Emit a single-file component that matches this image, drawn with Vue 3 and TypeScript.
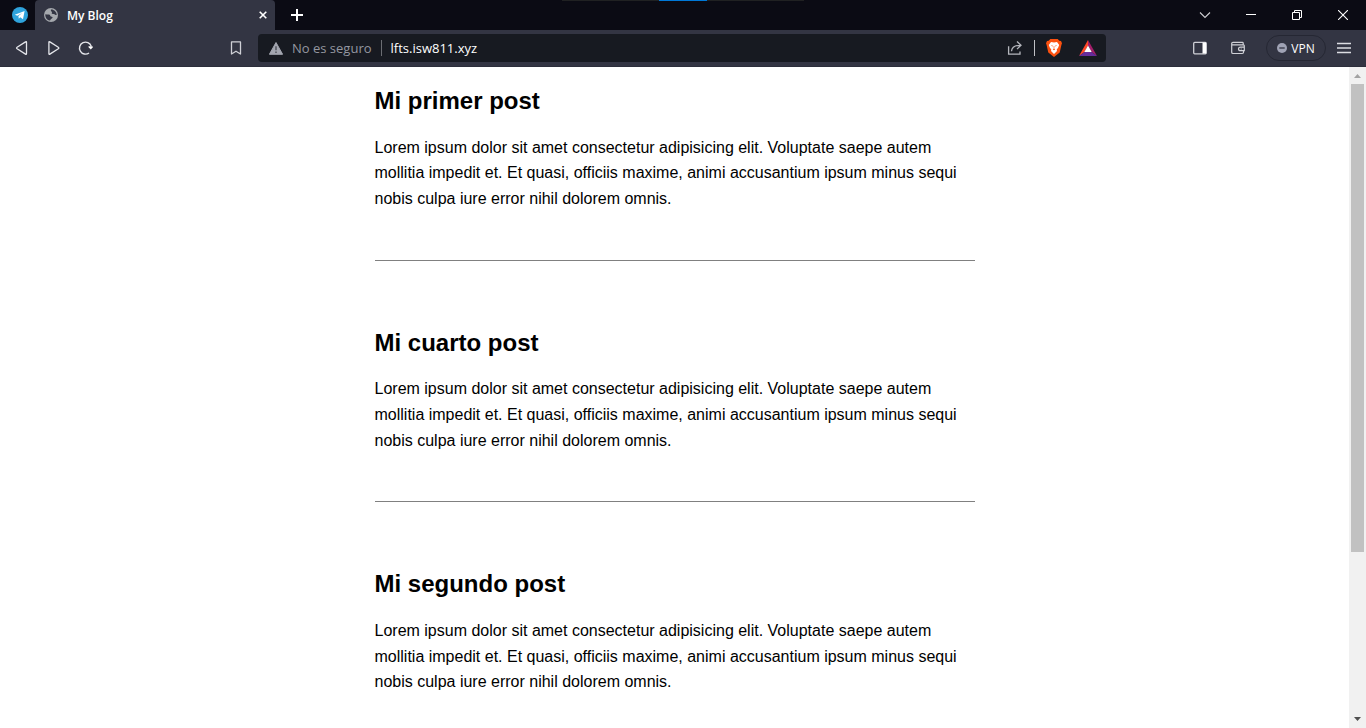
<script setup lang="ts">
interface Post {
  id: number
  title: string
  body: string
}

const body =
  'Lorem ipsum dolor sit amet consectetur adipisicing elit. Voluptate saepe autem mollitia impedit et. Et quasi, officiis maxime, animi accusantium ipsum minus sequi nobis culpa iure error nihil dolorem omnis.'

const posts: Post[] = [
  { id: 1, title: 'Mi primer post', body },
  { id: 4, title: 'Mi cuarto post', body },
  { id: 2, title: 'Mi segundo post', body },
]
</script>

<template>
  <div class="browser">
    <header class="chrome">
      <div class="tabstrip">
        <div class="drag-hint" aria-hidden="true"><span></span></div>
        <button class="pinned" aria-label="Telegram">
          <svg width="16" height="16" viewBox="0 0 16 16">
            <circle cx="8" cy="8" r="8" fill="#2fa3dc" />
            <path d="M2.8 7.8 12.6 4 11 12.2 8.2 10.3 6.8 11.7 6.4 9 10.2 5.9 5.3 8.7Z" fill="#fff" />
          </svg>
        </button>
        <div class="tab">
          <svg width="14" height="14" viewBox="0 0 14 14">
            <circle cx="7" cy="7" r="7" fill="#a5a8ad" />
            <path d="M1.3 6.2C3.5 6.6 5 6 5.9 7.1 6.6 8 6.2 8.7 7.8 8.8 9 8.9 8.7 10 7.8 10.4 6.5 11 6.8 12 5.6 12.5 3 12 1.1 9.5 1.3 6.2Z" fill="#333543" />
            <path d="M7 1.6C9.7 1.3 12.6 3.8 12.7 7 11 7.2 10.8 5.7 9.2 6 7.8 6.2 7.3 5.3 8 4.6 8.7 4 6.3 3.6 7 1.6Z" fill="#333543" />
          </svg>
          <span class="tab-title">My Blog</span>
          <button class="tab-close" aria-label="Cerrar pestaña">
            <svg width="8" height="8" viewBox="0 0 8 8"><path d="M.7.7 7.3 7.3M7.3.7.7 7.3" stroke="#fff" stroke-width="1.6" /></svg>
          </button>
        </div>
        <button class="new-tab" aria-label="Nueva pestaña">
          <svg width="12" height="12" viewBox="0 0 12 12"><path d="M6 0V12M0 6H12" stroke="#fff" stroke-width="2" /></svg>
        </button>
        <div class="window-controls">
          <button aria-label="Buscar pestañas">
            <svg width="12" height="12" viewBox="0 0 12 12"><path d="M1 3.5 6 8.5 11 3.5" fill="none" stroke="#d0d0d4" stroke-width="1.1" /></svg>
          </button>
          <button aria-label="Minimizar">
            <svg width="10" height="10" viewBox="0 0 10 10"><path d="M0 4.5H10" stroke="#fff" /></svg>
          </button>
          <button aria-label="Restaurar">
            <svg width="10" height="10" viewBox="0 0 10 10"><path d="M.5 2.5H7.5V9.5H.5ZM2.5 2.5V.5H9.5V7.5H7.5" fill="none" stroke="#fff" /></svg>
          </button>
          <button aria-label="Cerrar">
            <svg width="10" height="10" viewBox="0 0 10 10"><path d="M0 0 10 10M10 0 0 10" stroke="#fff" stroke-width="1.1" /></svg>
          </button>
        </div>
      </div>

      <div class="toolbar">
        <div class="nav">
          <button aria-label="Atrás">
            <svg width="16" height="16" viewBox="0 0 16 16"><path d="M12.5 2.4V13.6Q12.5 14.8 11.5 14.1L3.1 8.8Q2 8 3.1 7.2L11.5 1.9Q12.5 1.2 12.5 2.4Z" fill="none" stroke="#e4e5ea" stroke-width="1.3" /></svg>
          </button>
          <button aria-label="Adelante">
            <svg width="16" height="16" viewBox="0 0 16 16"><path d="M2.9 2.4V13.6Q2.9 14.8 3.9 14.1L12.3 8.8Q13.4 8 12.3 7.2L3.9 1.9Q2.9 1.2 2.9 2.4Z" fill="none" stroke="#e4e5ea" stroke-width="1.3" /></svg>
          </button>
          <button aria-label="Recargar">
            <svg width="16" height="16" viewBox="0 0 16 16">
              <path d="M11 13A6 6 0 1 1 13.2 6.2" fill="none" stroke="#e4e5ea" stroke-width="1.4" />
              <path d="M10.4 6.2H14.6V7.6L12.8 9.4 10.8 7.6Z" fill="#fff" />
            </svg>
          </button>
        </div>
        <button class="bookmark" aria-label="Guardar marcador">
          <svg width="12" height="14" viewBox="0 0 12 14"><path d="M1.5.9H10.5V13L6 10.2 1.5 13Z" fill="none" stroke="#cfd0d6" stroke-width="1.3" stroke-linejoin="round" /></svg>
        </button>
        <div class="address">
          <button class="security">
            <svg width="14" height="13" viewBox="0 0 14 13">
              <path d="M7 .5 13.6 12.3H.4Z" fill="#a3a6b0" stroke="#a3a6b0" stroke-linejoin="round" />
              <path d="M7 4.2V8.2M7 9.4V11" stroke="#4b4e57" stroke-width="1.4" />
            </svg>
            <span>No es seguro</span>
          </button>
          <span class="rule"></span>
          <input class="url" type="text" value="lfts.isw811.xyz" aria-label="Dirección" />
          <button class="share" aria-label="Compartir">
            <svg width="16" height="16" viewBox="0 0 16 16">
              <path d="M1.6 6.3V14.2H13V11.4" fill="none" stroke="#b5b7bd" stroke-width="1.3" />
              <path d="M4.5 11.3C4.8 7.2 7.3 5.3 13.6 5.3M10 1.5 14 5.3 10 9.1" fill="none" stroke="#b5b7bd" stroke-width="1.3" />
            </svg>
          </button>
          <span class="rule light"></span>
          <button class="shield" aria-label="Brave Shields">
            <svg width="16" height="18" viewBox="0 0 16 18">
              <path d="M4.3 0H11.7L13.3 1.8 15 2 16 4.3 15.4 6 13.7 13.6 8 18 2.3 13.6.6 6 0 4.3 1 2 2.7 1.8Z" fill="#fb5110" />
              <path d="M5 3 8 3.6 11 3 13.2 6 12.1 8.8 10.7 10.5 11 12 8 15 5 12 5.3 10.5 3.9 8.8 2.8 6Z" fill="#fff" />
              <path d="M4.8 6.2 7 6.8 6.4 7.6ZM11.2 6.2 9 6.8 9.6 7.6ZM7.7 7H8.3V9.8L9.2 10.5 8 11.3 6.8 10.5 7.7 9.8Z" fill="#fb5110" />
            </svg>
          </button>
          <button class="rewards" aria-label="Brave Rewards">
            <svg width="18" height="16" viewBox="0 0 18 16">
              <path d="M9 0 0 16 5.5 12 9 5.5Z" fill="#ff4726" />
              <path d="M9 0 18 16 12.5 12 9 5.5Z" fill="#a21e69" />
              <path d="M0 16H18L12.5 12H5.5Z" fill="#652c9b" />
              <path d="M9 5.5 12.7 12H5.3Z" fill="#fff" />
            </svg>
          </button>
        </div>
        <div class="tools">
          <button aria-label="Barra lateral">
            <svg width="14" height="14" viewBox="0 0 14 14"><rect x=".7" y="1.4" width="12.6" height="11.4" rx="1" fill="none" stroke="#cfd0d6" stroke-width="1.3" /><path d="M9.5 1.5H13V12.5H9.5Z" fill="#fff" /></svg>
          </button>
          <button aria-label="Cartera">
            <svg width="14" height="14" viewBox="0 0 14 14"><path d="M12.2 3.8V2.2Q12.2 1.4 11.4 1.4H2Q.7 1.4.7 2.6V11.2Q.7 12.5 2 12.5H11.3Q12.5 12.5 12.5 11.3V10M.8 3.8H12.4Q13.3 3.8 13.3 4.7V9.7H9.6Q7.5 9.7 7.5 8T9.6 6.2H13.3M9.7 8H10.7" fill="none" stroke="#cfd0d6" stroke-width="1.2" /></svg>
          </button>
          <button class="vpn">
            <svg width="10" height="10" viewBox="0 0 10 10"><circle cx="5" cy="5" r="5" fill="#a0a3b5" /><path d="M2.3 5H7.7" stroke="#333543" stroke-width="1.3" /></svg>
            <span>VPN</span>
          </button>
          <button aria-label="Menú">
            <svg width="14" height="12" viewBox="0 0 14 12"><path d="M0 1.5H14M0 6H14M0 10.5H14" stroke="#dcdde2" stroke-width="1.3" /></svg>
          </button>
        </div>
      </div>
    </header>

    <div class="viewport">
      <main class="page">
        <article v-for="post in posts" :key="post.id">
          <h1>{{ post.title }}</h1>
          <p>{{ post.body }}</p>
        </article>
      </main>
      <div class="scrollbar" aria-hidden="true">
        <svg width="17" height="17" viewBox="0 0 17 17"><path d="M5 11 8.5 7 12 11Z" fill="#a3a3a3" /></svg>
        <div class="track"><div class="thumb"></div></div>
        <svg width="17" height="17" viewBox="0 0 17 17"><path d="M5 6 8.5 10 12 6Z" fill="#505050" /></svg>
      </div>
    </div>
  </div>
</template>

<style>
body {
  margin: 0;
}
</style>

<style scoped>
.browser {
  display: flex;
  flex-direction: column;
  height: 100vh;
  overflow: hidden;
  background: #fff;
}
.chrome {
  flex: none;
  font-family: "Segoe UI", "Open Sans", "Noto Sans", sans-serif;
  color: #fff;
}
button {
  display: flex;
  align-items: center;
  justify-content: center;
  flex: none;
  padding: 0;
  border: 0;
  background: none;
  color: inherit;
  font: inherit;
}
svg {
  display: block;
  flex: none;
}
.tabstrip {
  position: relative;
  display: flex;
  height: 30px;
  background: #0b0b14;
}
.drag-hint {
  position: absolute;
  top: 0;
  left: 50%;
  display: flex;
  justify-content: center;
  width: 242px;
  height: 1px;
  transform: translateX(-50%);
  background: #202122;
}
.drag-hint span {
  width: 48px;
  background: #0078d7;
}
.pinned {
  width: 35px;
  padding-left: 5px;
}
.tab {
  display: flex;
  align-items: center;
  box-sizing: border-box;
  width: 240px;
  padding: 0 8px 0 9px;
  border-radius: 4px 4px 0 0;
  background: #333543;
}
.tab-title {
  flex: 1;
  padding-left: 9px;
  font-size: 12px;
  font-weight: 600;
}
.tab-close {
  width: 8px;
  height: 16px;
}
.new-tab {
  width: 44px;
}
.window-controls {
  display: flex;
  margin-left: auto;
}
.window-controls button {
  width: 46px;
}
.toolbar {
  display: flex;
  align-items: center;
  box-sizing: border-box;
  height: 37px;
  padding: 0 6px;
  border-bottom: 1px solid #2c2e3b;
  background: #333543;
}
.nav {
  display: flex;
}
.nav button {
  width: 32px;
  height: 32px;
}
.bookmark {
  width: 32px;
  height: 32px;
  margin-left: 118px;
}
.address {
  display: flex;
  flex: 1;
  align-items: center;
  min-width: 0;
  height: 28px;
  margin-left: 6px;
  padding: 0 9px 0 11px;
  border-radius: 4px;
  background: #171a21;
  font-size: 13px;
}
.security {
  gap: 9px;
  color: #9497a0;
}
.rule {
  width: 1px;
  height: 16px;
  margin: 0 9px;
  background: #6b6d73;
}
.rule.light {
  margin: 0 11px;
  background: #c0c1c5;
}
.url {
  flex: 1;
  min-width: 0;
  padding: 0;
  border: 0;
  outline: 0;
  background: none;
  color: #fff;
  font: inherit;
}
.rewards {
  margin-left: 17px;
}
.tools {
  display: flex;
  align-items: center;
  margin-left: 78px;
}
.tools button {
  width: 32px;
  height: 32px;
}
.tools button + button {
  margin-left: 6px;
}
.tools .vpn {
  box-sizing: border-box;
  gap: 4px;
  width: 60px;
  height: 26px;
  margin-left: 12px;
  border: 1px solid #252733;
  border-radius: 13px;
  font-size: 12px;
}
.tools .vpn + button {
  margin-left: 2px;
}
.viewport {
  display: flex;
  flex: 1;
  min-height: 0;
}
.page {
  flex: 1;
  min-width: 0;
  overflow: hidden;
  color: #000;
  font-family: Arial, "Liberation Sans", sans-serif;
  font-size: 16px;
  line-height: 1.6;
}
article {
  max-width: 600px;
  margin: 0 auto;
}
article + article {
  margin-top: 48px;
  padding-top: 48px;
  border-top: 1px solid #808080;
}
h1 {
  margin: 0.83em 0;
  font-size: 24px;
  line-height: 28px;
}
p {
  margin: 0;
}
.scrollbar {
  display: flex;
  flex: none;
  flex-direction: column;
  width: 17px;
  background: #f1f1f1;
}
.track {
  flex: 1;
  padding: 0 2px;
}
.thumb {
  height: 468px;
  background: #c1c1c1;
}
</style>
